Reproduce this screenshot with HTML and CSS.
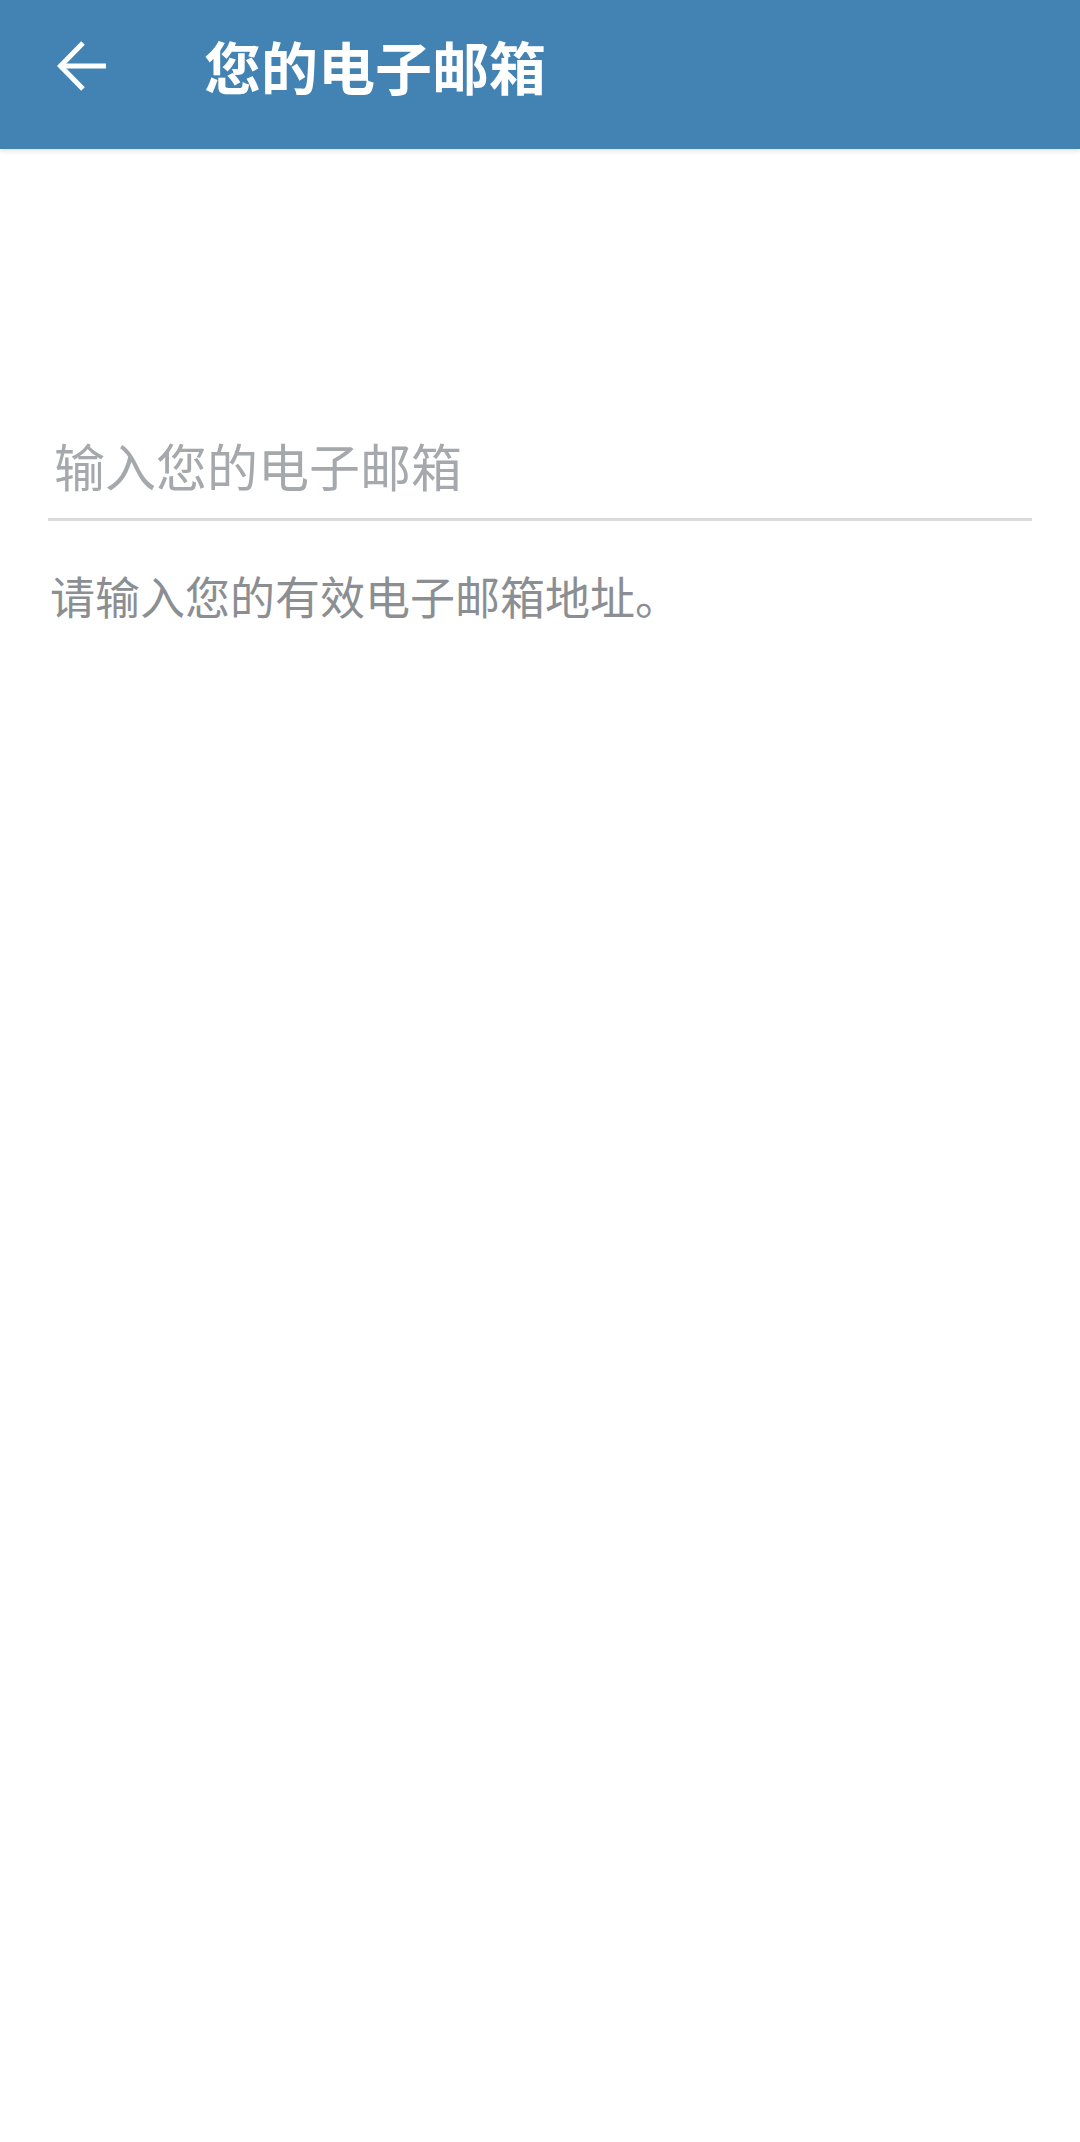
FILE: index.html
```html
<!DOCTYPE html>
<html lang="zh-CN">
<head>
  <meta charset="UTF-8" />
  <meta name="viewport" content="width=device-width, initial-scale=1.0"/>
  <title>您的电子邮箱</title>
  <link rel="stylesheet" href="styles.css">
</head>
<body>

  <!-- Action bar -->
  <div class="action-bar">
    <button class="back-btn" aria-label="返回">
      <svg width="52" height="52" viewBox="0 0 52 52" fill="none" stroke="#ffffff" stroke-width="5">
        <path d="M4 26 H50" />
        <path d="M27 3 L4.5 26 L27 49" />
      </svg>
    </button>
    <h1 class="title">您的电子邮箱</h1>
  </div>

  <div class="content">
    <input class="email-input" type="email" placeholder="输入您的电子邮箱" />
    <p class="hint">请输入您的有效电子邮箱地址。</p>
  </div>

</body>
</html>
```

FILE: styles.css
```css
body {
  margin: 0;
  background: #ffffff;
  font-family: 'Noto Sans CJK SC', 'Noto Sans', sans-serif;
  height: 100vh;
}
.action-bar {
  display: flex;
  align-items: center;
  height: 149px;
  background: #4283b3;
  padding-left: 56px;
  box-shadow: 0 2px 5px rgba(0,0,0,0.12);
  position: relative;
}
.back-btn {
  display: flex;
  align-items: center;
  justify-content: center;
  background: none;
  border: none;
  padding: 0;
  margin: 0;
  margin-top: -18px;
}
.title {
  margin: 0 0 0 96px;
  margin-top: -18px;
  color: #ffffff;
  font-size: 57px;
  font-weight: bold;
  line-height: 1;
}
.content {
  padding: 0 48px;
}
.email-input {
  display: block;
  box-sizing: border-box;
  width: 100%;
  height: 102px;
  margin-top: 270px;
  padding: 0 6px 8px;
  border: none;
  border-bottom: 3px solid #dadada;
  outline: none;
  font-family: 'Noto Sans CJK SC', 'Noto Sans', sans-serif;
  font-size: 51px;
  color: #222222;
  background: transparent;
}
.email-input::placeholder {
  color: #a5a8ac;
}
.hint {
  margin: 44px 0 0 2px;
  font-size: 45px;
  line-height: 62px;
  color: #8b8e92;
}
```
